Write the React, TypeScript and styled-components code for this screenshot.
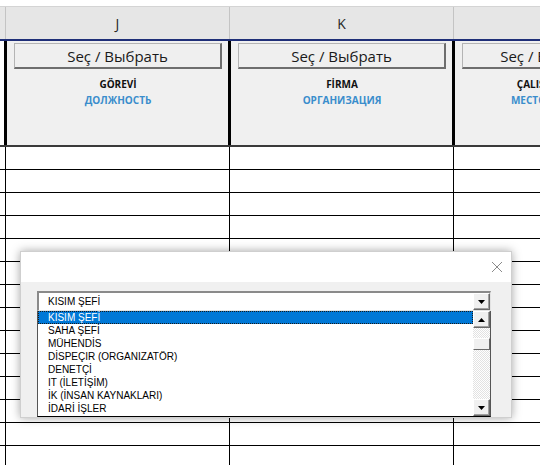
import React from 'react';
import styled, { createGlobalStyle } from 'styled-components';

const GlobalStyle = createGlobalStyle`
  html, body {
    margin: 0;
    padding: 0;
    background: #fff;
  }
  body {
    font-family: 'Liberation Sans', Arial, sans-serif;
  }
`;

// column templates: a narrow stub of the previous column, then J, K, L
const GRID_COLS = '6px 224px 224px 194px';
const HEAD_COLS = '7px 224px 224px 194px';

const Sheet = styled.div`
  position: relative;
  width: 540px;
  height: 465px;
  overflow: hidden;
  padding-top: 6px;
  box-sizing: border-box;
  background: #fff;
`;

const LetterRow = styled.div`
  display: grid;
  grid-template-columns: ${GRID_COLS};
  height: 32px;
  background: #e6e6e6;
  border-top: 1px solid #d4d4d4;
  border-bottom: 2px solid #1f2f78;
`;

const Letter = styled.div`
  display: flex;
  align-items: center;
  justify-content: center;
  border-right: 1px solid #c4c4c4;
  font-family: 'Open Sans', sans-serif;
  font-size: 14px;
  color: #262626;
`;

const FieldRow = styled.div`
  display: grid;
  grid-template-columns: ${HEAD_COLS};
  height: 104px;
  border-bottom: 2px solid #3a3a3a;
`;

const Stub = styled.div<{ $thick?: boolean }>`
  background: #fff;
  border-right: ${(p) => (p.$thick ? '3px' : '1px')} solid #000;
`;

const FieldCell = styled.div`
  display: flex;
  flex-direction: column;
  align-items: stretch;
  padding: 2px 6px 0 7px;
  background: #f0f0f0;
  border-right: 3px solid #000;
  overflow: hidden;
`;

const PickButton = styled.button`
  height: 26px;
  padding: 0;
  background: #efefef;
  border-top: 1px solid #b4b4b4;
  border-left: 1px solid #b4b4b4;
  border-right: 2px solid #6e6e6e;
  border-bottom: 2px solid #6e6e6e;
  font-family: 'Open Sans', sans-serif;
  font-size: 15px;
  color: #1a1a1a;
  white-space: nowrap;
  overflow: hidden;
`;

const Label = styled.div<{ $ru?: boolean }>`
  margin-top: ${(p) => (p.$ru ? '0' : '7px')};
  height: 16px;
  line-height: 16px;
  text-align: center;
  white-space: nowrap;
  font-family: 'Open Sans', sans-serif;
  font-weight: 700;
  font-size: 10px;
  color: ${(p) => (p.$ru ? '#3a8dcc' : '#111')};
`;

const DataRow = styled.div`
  display: grid;
  grid-template-columns: ${GRID_COLS};
  height: 22px;
  border-bottom: 1px solid #000;
`;

const DataCell = styled.div`
  border-right: 1px solid #000;
`;

/* dialog window lying over the sheet */
const Dialog = styled.div`
  position: absolute;
  left: 20px;
  top: 251px;
  width: 492px;
  background: #f0f0f0;
  box-shadow: 0 0 9px rgba(0, 0, 0, 0.35);
  border: 1px solid #cfcfcf;
  box-sizing: border-box;
`;

const TitleBar = styled.div`
  height: 30px;
  background: #fff;
  display: flex;
  align-items: center;
  justify-content: flex-end;
  padding-right: 8px;
`;

const Body = styled.div`
  padding: 9px 20px 0 16px;
`;

const Combo = styled.div`
  height: 20px;
  box-sizing: border-box;
  display: flex;
  align-items: center;
  background: #fff;
  border-top: 2px solid #8a8a8a;
  border-left: 2px solid #8a8a8a;
  border-right: 1px solid #e3e3e3;
  border-bottom: 1px solid #e3e3e3;
`;

const ComboText = styled.div`
  flex: 1;
  padding-left: 9px;
  font-size: 10px;
  color: #000;
`;

const ArrowButton = styled.div<{ $h?: number }>`
  width: 17px;
  height: ${(p) => p.$h ?? 17}px;
  box-sizing: border-box;
  display: flex;
  align-items: center;
  justify-content: center;
  background: #f0f0f0;
  border-top: 1px solid #fff;
  border-left: 1px solid #fff;
  border-right: 1px solid #6a6a6a;
  border-bottom: 1px solid #6a6a6a;
  box-shadow: inset -1px -1px 0 #a0a0a0;
`;

const ListBox = styled.div`
  display: flex;
  height: 106px;
  box-sizing: border-box;
  background: #fff;
  border-left: 1px solid #555;
  border-right: 1px solid #555;
  border-bottom: 1px solid #000;
`;

const Items = styled.div`
  flex: 1;
  display: flex;
  flex-direction: column;
`;

const Item = styled.div<{ $active?: boolean }>`
  height: 13px;
  line-height: 11px;
  box-sizing: border-box;
  padding-left: 9px;
  font-size: 10px;
  white-space: nowrap;
  color: ${(p) => (p.$active ? '#fff' : '#000')};
  background: ${(p) => (p.$active ? '#0078d7' : 'transparent')};
  border: 1px ${(p) => (p.$active ? 'dotted #1a1a1a' : 'solid transparent')};
`;

const ScrollBar = styled.div`
  width: 17px;
  display: flex;
  flex-direction: column;
`;

const Track = styled.div`
  flex: 1;
  background-color: #fff;
  background-image: repeating-conic-gradient(#e2e2e2 0 25%, #fff 0 50%);
  background-size: 2px 2px;
`;

const Thumb = styled.div`
  margin-top: 10px;
  height: 12px;
  background: #f0f0f0;
  border-top: 1px solid #fff;
  border-left: 1px solid #fff;
  border-right: 1px solid #6a6a6a;
  border-bottom: 1px solid #6a6a6a;
  box-sizing: border-box;
`;

const Tri = ({ up }: { up?: boolean }) => (
  <svg width="7" height="4" viewBox="0 0 7 4">
    <polygon points={up ? '3.5,0 7,4 0,4' : '0,0 7,0 3.5,4'} fill="#000" />
  </svg>
);

const CloseIcon = () => (
  <svg width="12" height="12" viewBox="0 0 12 12">
    <path d="M1 1 L11 11 M11 1 L1 11" stroke="#8a8a8a" strokeWidth="1" fill="none" />
  </svg>
);

const columns = [
  { letter: 'J', tr: 'GÖREVİ', ru: 'ДОЛЖНОСТЬ' },
  { letter: 'K', tr: 'FİRMA', ru: 'ОРГАНИЗАЦИЯ' },
  { letter: 'L', tr: 'ÇALIŞMA YERİ', ru: 'МЕСТО РАБОТЫ' },
];

const options = [
  'KISIM ŞEFİ',
  'SAHA ŞEFİ',
  'MÜHENDİS',
  'DİSPEÇIR (ORGANIZATÖR)',
  'DENETÇİ',
  'IT (İLETİŞİM)',
  'İK (İNSAN KAYNAKLARI)',
  'İDARİ İŞLER',
];

const ROWS = 14;

export default function App() {
  return (
    <>
      <GlobalStyle />
      <Sheet>
        <LetterRow>
          <Letter />
          {columns.map((c) => (
            <Letter key={c.letter}>{c.letter}</Letter>
          ))}
        </LetterRow>

        <FieldRow>
          <Stub $thick />
          {columns.map((c) => (
            <FieldCell key={c.letter}>
              <PickButton>Seç / Выбрать</PickButton>
              <Label>{c.tr}</Label>
              <Label $ru>{c.ru}</Label>
            </FieldCell>
          ))}
        </FieldRow>

        {Array.from({ length: ROWS }).map((_, i) => (
          <DataRow key={i}>
            <DataCell />
            <DataCell />
            <DataCell />
            <DataCell />
          </DataRow>
        ))}

        <Dialog>
          <TitleBar>
            <CloseIcon />
          </TitleBar>
          <Body>
            <Combo>
              <ComboText>KISIM ŞEFİ</ComboText>
              <ArrowButton $h={17}>
                <Tri />
              </ArrowButton>
            </Combo>
            <ListBox>
              <Items>
                {options.map((o, i) => (
                  <Item key={o} $active={i === 0}>
                    {o}
                  </Item>
                ))}
              </Items>
              <ScrollBar>
                <ArrowButton>
                  <Tri up />
                </ArrowButton>
                <Track>
                  <Thumb />
                </Track>
                <ArrowButton>
                  <Tri />
                </ArrowButton>
              </ScrollBar>
            </ListBox>
          </Body>
        </Dialog>
      </Sheet>
    </>
  );
}
